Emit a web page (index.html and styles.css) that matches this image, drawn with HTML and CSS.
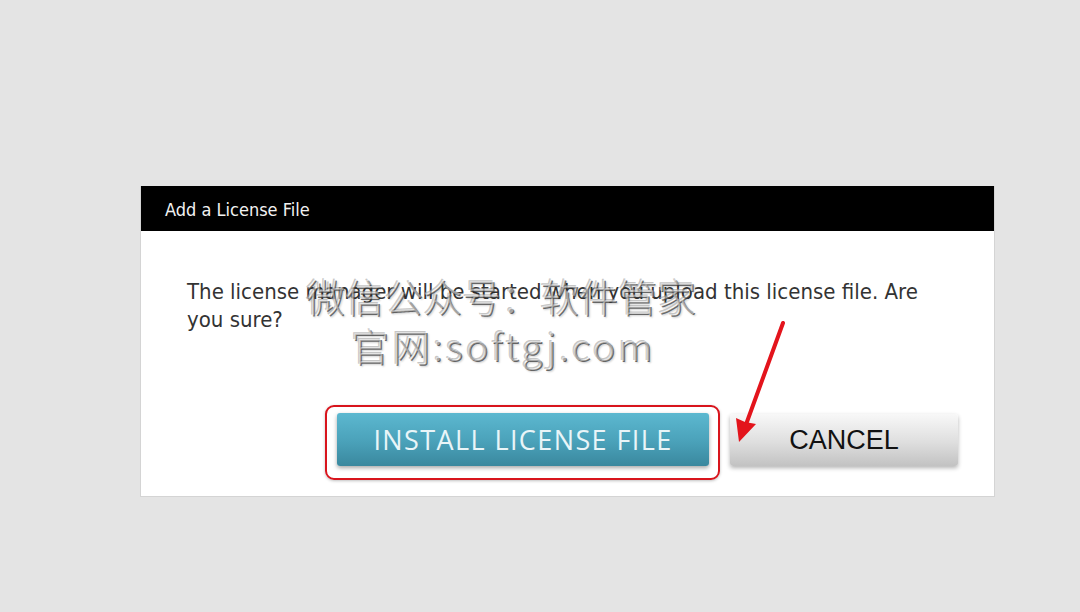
FILE: index.html
```html
<!DOCTYPE html>
<html lang="en">
<head>
  <meta charset="UTF-8" />
  <title>Add a License File</title>
  <link rel="stylesheet" href="styles.css">
</head>
<body>
  <div class="dialog">
    <div class="dialog-header">Add a License File</div>
    <div class="dialog-body">
      <p class="message">The license manager will be started when you upload this license file. Are you sure?</p>
      <div class="actions">
        <div class="highlight">
          <button class="btn btn-install">INSTALL LICENSE FILE</button>
        </div>
        <button class="btn btn-cancel">CANCEL</button>
      </div>
    </div>

    <!-- annotation arrow -->
    <svg class="arrow" width="70" height="140" viewBox="0 0 70 140">
      <line x1="52" y1="9" x2="13" y2="116" stroke="#e3141c" stroke-width="4" stroke-linecap="round"/>
      <polygon points="8,128 5,104 14,108 25,110" fill="#e3141c"/>
    </svg>

    <!-- watermark -->
    <div class="watermark">
      <div class="wm-line1">微信公众号：软件管家</div>
      <div class="wm-line2">官网:softgj.com</div>
    </div>
  </div>
</body>
</html>
```

FILE: styles.css
```css
* {
  margin: 0;
  padding: 0;
  box-sizing: border-box;
}

body {
  background: #e4e4e4;
  font-family: 'Liberation Sans', Arial, sans-serif;
}

.dialog {
  position: relative;
  margin: 186px 0 0 140px;
  width: 855px;
  background: #fff;
  border: 1px solid #d4d4d4;
  border-top: none;
}

.dialog-header {
  height: 45px;
  background: #000;
  color: #f2f2f2;
  font-family: 'DejaVu Sans Condensed', 'DejaVu Sans', sans-serif;
  font-size: 18px;
  line-height: 47px;
  padding-left: 24px;
}

.dialog-body {
  padding: 47px 36px 16px 46px;
}

.message {
  font-family: 'DejaVu Sans Condensed', 'DejaVu Sans', sans-serif;
  font-size: 22px;
  line-height: 28px;
  color: #333;
  width: 760px;
}

.actions {
  display: flex;
  justify-content: flex-end;
  align-items: flex-start;
  gap: 10px;
  margin-top: 71px;
}

.highlight {
  border: 2.5px solid #d8141c;
  border-radius: 9px;
  padding: 6px 9px 12px 10px;
  box-shadow: 0 1px 3px rgba(0,0,0,0.25);
}

.btn {
  border: none;
  border-radius: 3px;
  cursor: pointer;
  display: block;
}

.btn-install {
  width: 372px;
  height: 53px;
  background: linear-gradient(to bottom, #5cb8d0, #4aa1b9 55%, #3a889e);
  color: #e9f5f8;
  font-family: 'Open Sans', sans-serif;
  font-size: 27px;
  letter-spacing: 1.4px;
  box-shadow: 0 2px 4px rgba(0,0,0,0.35);
}

.btn-cancel {
  margin-top: 9px;
  width: 228px;
  height: 52px;
  background: linear-gradient(to bottom, #f8f8f8, #dedede 55%, #c2c2c2);
  color: #111;
  font-family: 'Liberation Sans', Arial, sans-serif;
  font-size: 27px;
  box-shadow: 0 2px 4px rgba(0,0,0,0.3);
}

.arrow {
  position: absolute;
  left: 590px;
  top: 128px;
}

.watermark {
  position: absolute;
  left: 165px;
  top: 84px;
  color: rgba(255,255,255,0.45);
  font-family: 'Noto Sans CJK SC', sans-serif;
  font-weight: 300;
  text-shadow: 1px 1px 0 rgba(60,60,60,0.75), -1px -1px 0 rgba(160,160,160,0.6), 2px 2px 2px rgba(0,0,0,0.2);
  pointer-events: none;
}

.wm-line1 {
  font-size: 39px;
  line-height: 50px;
}

.wm-line2 {
  margin-left: 45px;
  font-size: 38px;
  line-height: 50px;
  letter-spacing: 3px;
}
```
